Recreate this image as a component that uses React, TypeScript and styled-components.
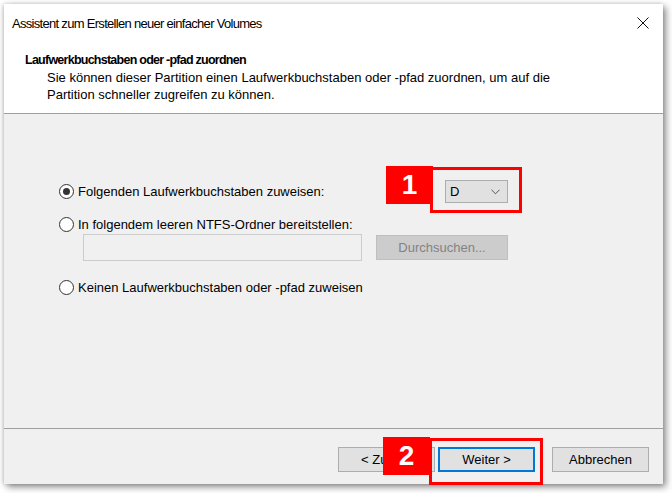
import styled, { createGlobalStyle } from 'styled-components'

const GlobalStyle = createGlobalStyle`
	html, body {
		margin: 0;
		padding: 0;
		background: #ffffff;
	}
	body {
		font-family: 'Liberation Sans', Arial, sans-serif;
		color: #000000;
	}
`

export default function App() {
	return (
		<>
			<GlobalStyle />
			<Stage>
				<Window>
					<TitleBar>
						<TitleText>Assistent zum Erstellen neuer einfacher Volumes</TitleText>
						<CloseIcon viewBox='0 0 12 12' aria-hidden>
							<path d='M0.5 0.5 L11.5 11.5 M11.5 0.5 L0.5 11.5' />
						</CloseIcon>
					</TitleBar>
					<Header>
						<HeaderTitle>Laufwerkbuchstaben oder -pfad zuordnen</HeaderTitle>
						<HeaderText>
							Sie können dieser Partition einen Laufwerkbuchstaben oder -pfad
							zuordnen, um auf die
							<br />
							Partition schneller zugreifen zu können.
						</HeaderText>
					</Header>
					<Body>
						<LetterRow>
							<RadioLabel $width={386}>
								<Radio $checked />
								Folgenden Laufwerkbuchstaben zuweisen:
							</RadioLabel>
							<Select>
								<span>D</span>
								<Chevron viewBox='0 0 10 6' aria-hidden>
									<path d='M0.5 0.5 L5 5 L9.5 0.5' />
								</Chevron>
							</Select>
						</LetterRow>
						<RadioLabel $top={13}>
							<Radio />
							In folgendem leeren NTFS-Ordner bereitstellen:
						</RadioLabel>
						<FolderRow>
							<PathInput />
							<Button $disabled $width={132}>
								Durchsuchen...
							</Button>
						</FolderRow>
						<RadioLabel $top={18}>
							<Radio />
							Keinen Laufwerkbuchstaben oder -pfad zuweisen
						</RadioLabel>
					</Body>
					<Footer>
						<NavGroup>
							<Button $width={97}>&lt; Zurück</Button>
							<Button $width={97} $primary>
								Weiter &gt;
							</Button>
						</NavGroup>
						<Button $width={97}>Abbrechen</Button>
					</Footer>

					<Badge style={{ left: 382, top: 162, height: 38 }}>1</Badge>
					<Highlight style={{ left: 426, top: 163, width: 92, height: 46 }} />
					<Badge style={{ left: 379, top: 433, height: 38 }}>2</Badge>
					<Highlight style={{ left: 425, top: 434, width: 114, height: 47 }} />
				</Window>
			</Stage>
		</>
	)
}

const Stage = styled.div`
	padding: 4px 0 0 4px;
	width: 672px;
	height: 493px;
	box-sizing: border-box;
	overflow: hidden;
`

const Window = styled.div`
	position: relative;
	width: 659px;
	height: 480px;
	display: flex;
	flex-direction: column;
	background: #f0f0f0;
	box-shadow:
		3px 3px 7px rgba(0, 0, 0, 0.45),
		-1px 0 4px rgba(0, 0, 0, 0.18);
`

const TitleBar = styled.div`
	height: 38px;
	display: flex;
	align-items: center;
	justify-content: space-between;
	padding: 0 14px 0 8px;
	background: #ffffff;
`

const TitleText = styled.div`
	font-size: 13px;
	letter-spacing: -0.7px;
	color: #000000;
	padding-top: 1px;
`

const CloseIcon = styled.svg`
	width: 12px;
	height: 12px;
	fill: none;
	stroke: #111111;
	stroke-width: 1;
`

const Header = styled.div`
	height: 72px;
	padding: 10px 0 0 21px;
	box-sizing: border-box;
	background: #ffffff;
	border-bottom: 1px solid #a0a0a0;
`

const HeaderTitle = styled.div`
	font-size: 12.5px;
	font-weight: bold;
	letter-spacing: -0.75px;
	line-height: 17px;
`

const HeaderText = styled.div`
	font-size: 13px;
	line-height: 17px;
	padding-left: 22px;
`

const Body = styled.div`
	flex: 1;
	display: flex;
	flex-direction: column;
	padding: 66px 0 0 55px;
	border-bottom: 1px solid #a0a0a0;
	font-size: 13px;
`

const LetterRow = styled.div`
	display: flex;
	align-items: center;
	height: 23px;
`

const RadioLabel = styled.label<{ $width?: number; $top?: number }>`
	display: flex;
	align-items: center;
	gap: 4px;
	height: 16px;
	margin-top: ${(p) => p.$top ?? 0}px;
	width: ${(p) => (p.$width ? `${p.$width}px` : 'auto')};
	font-size: 13px;
	white-space: nowrap;
`

const Radio = styled.span<{ $checked?: boolean }>`
	position: relative;
	width: 15px;
	height: 15px;
	box-sizing: border-box;
	border-radius: 50%;
	border: 1px solid #333333;
	background: #ffffff;
	flex-shrink: 0;

	&::after {
		content: '';
		display: ${(p) => (p.$checked ? 'block' : 'none')};
		position: absolute;
		left: 3px;
		top: 3px;
		width: 7px;
		height: 7px;
		border-radius: 50%;
		background: #333333;
	}
`

const Select = styled.div`
	width: 63px;
	height: 23px;
	box-sizing: border-box;
	display: flex;
	align-items: center;
	justify-content: space-between;
	padding: 0 7px 0 4px;
	background: #e1e1e1;
	border: 1px solid #adadad;
	font-size: 13px;
`

const Chevron = styled.svg`
	width: 9px;
	height: 6px;
	fill: none;
	stroke: #444444;
	stroke-width: 1;
`

const FolderRow = styled.div`
	display: flex;
	align-items: center;
	gap: 14px;
	margin: 2px 0 0 24px;
`

const PathInput = styled.div`
	width: 279px;
	height: 27px;
	box-sizing: border-box;
	background: #f0f0f0;
	border: 1px solid #cccccc;
`

const Button = styled.div<{ $width: number; $disabled?: boolean; $primary?: boolean }>`
	width: ${(p) => p.$width}px;
	height: 25px;
	box-sizing: border-box;
	display: flex;
	align-items: center;
	justify-content: center;
	font-size: 13px;
	background: ${(p) => (p.$disabled ? '#cccccc' : '#e1e1e1')};
	color: ${(p) => (p.$disabled ? '#838383' : '#000000')};
	border: ${(p) =>
		p.$primary ? '2px solid #0078d7' : `1px solid ${p.$disabled ? '#bfbfbf' : '#adadad'}`};
`

const Footer = styled.div`
	height: 55px;
	display: flex;
	justify-content: flex-end;
	gap: 17px;
	padding: 18px 14px 0 0;
	box-sizing: border-box;
`

const NavGroup = styled.div`
	display: flex;
	gap: 3px;
`

const Badge = styled.div`
	position: absolute;
	width: 47px;
	display: flex;
	align-items: center;
	justify-content: center;
	background: #ff0000;
	color: #ffffff;
	font-size: 28px;
	font-weight: bold;
`

const Highlight = styled.div`
	position: absolute;
	box-sizing: border-box;
	border: 3px solid #ff0000;
`
